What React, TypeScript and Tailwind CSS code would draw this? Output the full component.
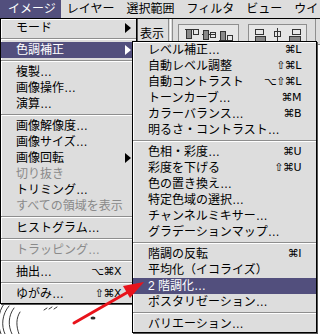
import clsx from 'clsx'

type Row = {
  label?: string
  keys?: string
  sub?: boolean
  off?: boolean
  on?: boolean
  sep?: boolean
}

const imageMenu: Row[] = [
  { label: 'モード', sub: true },
  { sep: true },
  { label: '色調補正', sub: true, on: true },
  { sep: true },
  { label: '複製…' },
  { label: '画像操作…' },
  { label: '演算…' },
  { sep: true },
  { label: '画像解像度…' },
  { label: '画像サイズ…' },
  { label: '画像回転', sub: true },
  { label: '切り抜き', off: true },
  { label: 'トリミング…' },
  { label: 'すべての領域を表示', off: true },
  { sep: true },
  { label: 'ヒストグラム…' },
  { sep: true },
  { label: 'トラッピング…', off: true },
  { sep: true },
  { label: '抽出…', keys: '⌥⌘X' },
  { sep: true },
  { label: 'ゆがみ…', keys: '⇧⌘X' },
]

const adjustMenu: Row[] = [
  { label: 'レベル補正…', keys: '⌘L' },
  { label: '自動レベル調整', keys: '⇧⌘L' },
  { label: '自動コントラスト', keys: '⌥⇧⌘L' },
  { label: 'トーンカーブ…', keys: '⌘M' },
  { label: 'カラーバランス…', keys: '⌘B' },
  { label: '明るさ・コントラスト…' },
  { sep: true },
  { label: '色相・彩度…', keys: '⌘U' },
  { label: '彩度を下げる', keys: '⇧⌘U' },
  { label: '色の置き換え…' },
  { label: '特定色域の選択…' },
  { label: 'チャンネルミキサー…' },
  { label: 'グラデーションマップ…' },
  { sep: true },
  { label: '階調の反転', keys: '⌘I' },
  { label: '平均化（イコライズ）' },
  { label: '2 階調化…', on: true },
  { label: 'ポスタリゼーション…' },
  { sep: true },
  { label: 'バリエーション…' },
]

const menuBar = ['イメージ', 'レイヤー', '選択範囲', 'フィルタ', 'ビュー', 'ウイ']

const SubArrow = ({ white }: { white?: boolean }) => (
  <svg width="6" height="10" viewBox="0 0 6 10">
    <path d="M0 0L6 5L0 10Z" fill={white ? '#ffffff' : '#000000'} />
  </svg>
)

const MenuRow = ({ row }: { row: Row }) => {
  if (row.sep) {
    return (
      <div className="flex h-[6px] flex-col justify-center">
        <div className="h-px bg-[#8e8e8e]" />
        <div className="h-px bg-white" />
      </div>
    )
  }

  return (
    <div
      className={clsx(
        'flex h-[16px] items-center pl-[15px] text-[12px] leading-[16px]',
        row.sub ? 'pr-[5px]' : 'pr-[15px]',
        row.on ? 'bg-[#524f7d] text-white' : row.off ? 'text-[#8a8a8a]' : 'text-black'
      )}
    >
      <span className="whitespace-nowrap">{row.label}</span>
      {row.keys && (
        <span className="ml-auto whitespace-nowrap font-['DejaVu_Sans',sans-serif] text-[11px] tracking-[-0.5px]">
          {row.keys}
        </span>
      )}
      {row.sub && (
        <span className="ml-auto flex">
          <SubArrow white={row.on} />
        </span>
      )}
    </div>
  )
}

const AlignIcons = ({ flip }: { flip?: boolean }) => (
  <svg width="48" height="14" viewBox="0 0 48 14">
    {flip ? (
      <g fill="none" stroke="#333" strokeWidth="1">
        <rect x="1.5" y="1.5" width="8" height="5" />
        <rect x="1.5" y="8.5" width="10" height="5" fill="#888" />
        <rect x="20.5" y="3.5" width="6" height="5" />
        <line x1="23.5" y1="0" x2="23.5" y2="14" />
        <rect x="38.5" y="1.5" width="8" height="5" />
        <rect x="35.5" y="8.5" width="11" height="5" fill="#888" />
      </g>
    ) : (
      <g fill="none" stroke="#333" strokeWidth="1">
        <line x1="0" y1="1.5" x2="14" y2="1.5" />
        <rect x="1.5" y="1.5" width="5" height="9" fill="#888" />
        <rect x="8.5" y="1.5" width="5" height="5" />
        <line x1="17" y1="6.5" x2="31" y2="6.5" />
        <rect x="18.5" y="2.5" width="5" height="9" fill="#888" />
        <rect x="25.5" y="4.5" width="5" height="5" />
        <line x1="34" y1="12.5" x2="48" y2="12.5" />
        <rect x="35.5" y="3.5" width="5" height="9" fill="#888" />
        <rect x="42.5" y="7.5" width="5" height="5" />
      </g>
    )}
  </svg>
)

const App = () => {
  return (
    <div className="relative h-[334px] w-[320px] overflow-hidden bg-white font-['Liberation_Sans','Noto_Sans_CJK_JP',sans-serif]">
      {/* menu bar */}
      <div className="flex h-[19px] items-center border-b border-black bg-[#dddddd] text-[12px] leading-[18px]">
        {menuBar.map((m, i) => (
          <div
            key={m}
            className={clsx(
              'h-[18px] whitespace-nowrap',
              i === 0 ? 'bg-[#524f7d] pl-[8px] pr-[5px] text-white' : 'px-[6px] text-black'
            )}
          >
            {m}
          </div>
        ))}
      </div>

      {/* options bar behind the menus */}
      <div className="flex h-[26px] items-start border-b border-[#8e8e8e] bg-[#dddddd] pl-[140px]">
        <div className="mt-[8px] text-[12px] leading-[14px] text-black">表示</div>
        <div className="ml-[4px] flex h-full gap-[1px]">
          <div className="w-px bg-[#8e8e8e]" />
          <div className="w-px bg-white" />
          <div className="w-px bg-[#8e8e8e]" />
        </div>
        <div className="ml-[5px] mt-[5px] flex h-[22px] w-[61px] items-center justify-center border border-[#8e8e8e] bg-[#e6e6e6]">
          <AlignIcons />
        </div>
        <div className="ml-[9px] mt-[5px] flex h-[22px] w-[59px] items-center justify-center border border-[#8e8e8e] bg-[#e6e6e6]">
          <AlignIcons flip />
        </div>
        <div className="ml-[8px] h-full w-px bg-[#8e8e8e]" />
      </div>

      {/* canvas with a pencil sketch */}
      <div className="h-[289px] bg-white">
        <svg className="h-full w-full" viewBox="0 45 320 289">
          <g fill="none" stroke="#3a3a3a" strokeWidth="1" strokeLinecap="round">
            <path d="M4 304 C-2 312 -3 324 1 334" />
            <path d="M9 306 C2 314 1 326 5 334" />
            <path d="M14 308 C8 316 8 326 12 334" />
            <path d="M20 312 C16 318 16 326 19 334" />
            <path d="M44 310 L47 308" />
            <path d="M49 309 L52 307" />
            <path d="M54 309 L57 307" />
          </g>
          <ellipse cx="93" cy="318" rx="2.5" ry="1.5" fill="#2a2a2a" />
        </svg>
      </div>

      {/* image menu */}
      <div className="absolute left-0 top-[18px] w-[137px] border border-black bg-[#dddddd] pb-[1px] pt-[1px] shadow-[inset_1px_1px_0_#ffffff,1px_1px_0_#555555]">
        {imageMenu.map((r, i) => (
          <MenuRow key={i} row={r} />
        ))}
      </div>

      {/* adjustments submenu */}
      <div className="absolute left-[132px] top-[41px] w-[185px] border border-black bg-[#dddddd] shadow-[inset_1px_1px_0_#ffffff,1px_1px_0_#555555]">
        {adjustMenu.map((r, i) => (
          <MenuRow key={i} row={r} />
        ))}
      </div>

      {/* red pointer arrow */}
      <svg className="pointer-events-none absolute inset-0" width="320" height="334" viewBox="0 0 320 334">
        <line x1="74" y1="323" x2="128" y2="292" stroke="#e8131b" strokeWidth="3" strokeLinecap="round" />
        <path d="M144 282 L123 286 L130 298 Z" fill="#e8131b" />
      </svg>
    </div>
  )
}

export default App
